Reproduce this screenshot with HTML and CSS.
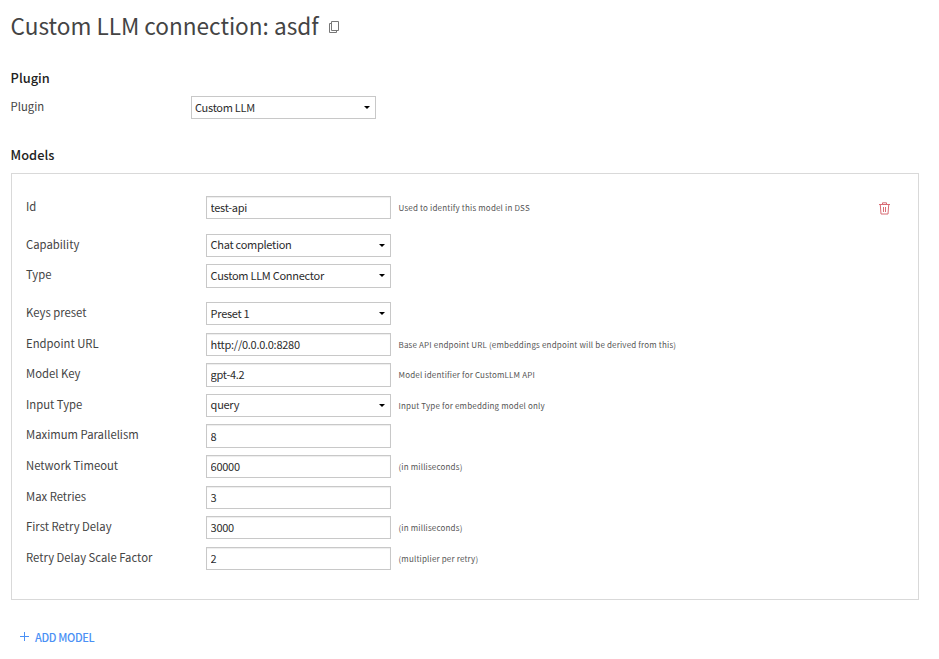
FILE: index.html
```html
<!DOCTYPE html>
<html lang="en">
<head>
<meta charset="utf-8">
<title>Custom LLM connection</title>
<link rel="stylesheet" href="styles.css">
</head>
<body>
<header class="title">
  <h1>Custom LLM connection: asdf</h1>
  <svg class="copy" width="12" height="13" viewBox="0 0 12 13" fill="none" stroke="#777"><path d="M3.5 .5h7v9h-7zM3.5 2.5h-2v9h7v-2"/></svg>
</header>
<section class="plugin">
  <h2>Plugin</h2>
  <div class="row"><label>Plugin</label><button class="field select">Custom LLM<i class="caret"></i></button></div>
</section>
<section class="models">
  <h2>Models</h2>
  <div class="card">
    <div class="row spaced"><label>Id</label><input class="field" value="test-api"><span class="hint">Used to identify this model in DSS</span>
      <svg class="trash" width="11" height="13" viewBox="0 0 11 13" fill="none" stroke="#d96c75"><path d="M0 2.5h11M3.5 2V.8h4V2M1.3 3l.7 9h7l.7-9M4.5 5v5M6.5 5v5"/></svg></div>
    <div class="row"><label>Capability</label><button class="field select">Chat completion<i class="caret"></i></button></div>
    <div class="row spaced"><label>Type</label><button class="field select">Custom LLM Connector<i class="caret"></i></button></div>
    <div class="row"><label>Keys preset</label><button class="field select">Preset 1<i class="caret"></i></button></div>
    <div class="row"><label>Endpoint URL</label><input class="field" value="http://0.0.0.0:8280"><span class="hint">Base API endpoint URL (embeddings endpoint will be derived from this)</span></div>
    <div class="row"><label>Model Key</label><input class="field" value="gpt-4.2"><span class="hint">Model identifier for CustomLLM API</span></div>
    <div class="row"><label>Input Type</label><button class="field select">query<i class="caret"></i></button><span class="hint">Input Type for embedding model only</span></div>
    <div class="row"><label>Maximum Parallelism</label><input class="field" value="8"></div>
    <div class="row"><label>Network Timeout</label><input class="field" value="60000"><span class="hint">(in milliseconds)</span></div>
    <div class="row"><label>Max Retries</label><input class="field" value="3"></div>
    <div class="row"><label>First Retry Delay</label><input class="field" value="3000"><span class="hint">(in milliseconds)</span></div>
    <div class="row"><label>Retry Delay Scale Factor</label><input class="field" value="2"><span class="hint">(multiplier per retry)</span></div>
  </div>
</section>
<button class="add"><svg width="9" height="9" viewBox="0 0 9 9" stroke="#4a90f5"><path d="M4.5 0v9M0 4.5h9"/></svg><span>ADD MODEL</span></button>
</body>
</html>
```
FILE: styles.css
```css
* { box-sizing: border-box; }
body { margin: 0; padding: 0 20px 0 10.6px; background: #fff; color: #444; font: 11.3px/20px "Noto Sans CJK SC", "Noto Sans", sans-serif; }
h1, h2 { margin: 0; }
.title { display: flex; align-items: center; height: 52px; gap: 9px; }
h1 { margin-top: -1px; font-size: 22.6px; line-height: 36px; font-weight: 400; color: #444; white-space: nowrap; }
.copy { margin-top: 2px; }
h2 { font-size: 12.8px; line-height: 20px; font-weight: 500; color: #222; }
.plugin { padding-top: 16px; }
.plugin .row { margin-top: 8px; }
.models { padding-top: 18.41px; }
.row { display: flex; height: 23.34375px; margin-bottom: 7.25px; }
.spaced { margin-bottom: 14.35px; }
.row label { width: 180px; line-height: 21px; white-space: nowrap; }
.field { width: 185px; height: 100%; margin: 0; padding: 0 4px; border: 1px solid #c8c8c8; border-radius: 0; background: #fff; color: #2c2c2c; font: inherit; font-size: 11px; letter-spacing: -.27px; line-height: 20px; }
input.field { box-shadow: inset 0 1px 1px rgba(0,0,0,.075); padding: 0 3.6px 1px; }
.select { display: flex; align-items: center; justify-content: space-between; text-align: left; padding: 0 5px 2px 3.6px; }
.plugin .select { padding-left: 3.4px; }
.caret { margin-top: 2px; border: 3px solid transparent; border-top-color: #000; border-bottom: 0; }
.hint { margin-left: 7.5px; font-size: 8px; letter-spacing: .17px; line-height: 23px; color: #555; white-space: nowrap; }
.card { height: 427px; margin-top: 8px; padding: 22px 28px 0 14.4px; border: 1px solid #d9d9d9; }
.trash { margin: 5.5px 0 0 auto; }
.add { display: flex; align-items: center; gap: 6px; margin: 27px 0 0 9.4px; padding: 0; border: 0; background: none; color: #4a90f5; font: inherit; font-size: 11px; letter-spacing: -.35px; font-weight: 500; line-height: 20px; }
.add svg { margin-top: -2px; }
```
